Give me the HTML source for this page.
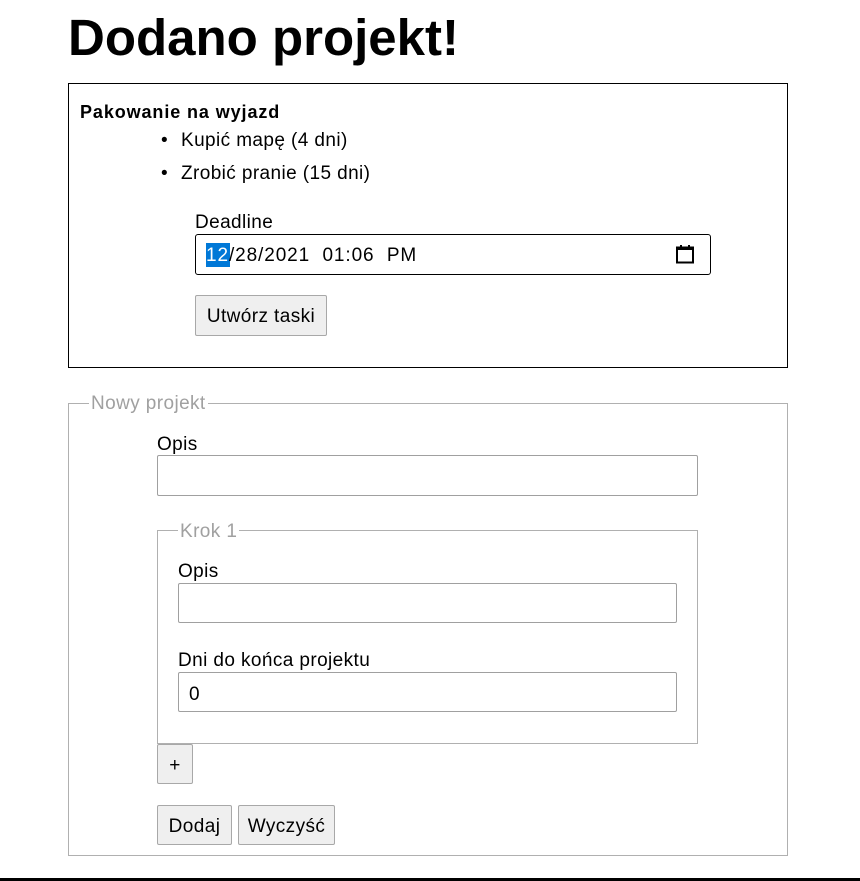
<!DOCTYPE html>
<html><head><meta charset="utf-8"><style>
body{margin:0;width:860px;height:881px;background:#fff;position:relative;font-family:"Liberation Sans","DejaVu Sans",sans-serif;font-size:19px;letter-spacing:0.4px;color:#000;overflow:hidden}
.a{position:absolute;white-space:nowrap;line-height:22px;margin-top:2px}
.box{position:absolute;box-sizing:border-box}
.inp{position:absolute;box-sizing:border-box;border:1px solid #a0a0a0;border-radius:2px;background:#fff}
.btn{position:absolute;box-sizing:border-box;border:1px solid #a8a8a8;border-radius:2px;background:#efefef;text-align:center;line-height:41px;font-size:19px}
.lg{position:absolute;background:#fff;color:#a0a0a0;padding:0 2px;line-height:22px;white-space:nowrap;margin-top:1px}
</style></head><body>
<div class="a" style="left:68px;top:6px;font-size:51px;letter-spacing:0;font-weight:bold;line-height:60px">Dodano projekt!</div>
<div class="box" style="left:68px;top:83px;width:720px;height:285px;border:1px solid #000"></div>
<div class="a" style="left:80px;top:99px;font-weight:bold;font-size:18px;letter-spacing:0.9px">Pakowanie na wyjazd</div>
<div class="a" style="left:161px;top:128px">•</div>
<div class="a" style="left:181px;top:128px">Kupić mapę (4 dni)</div>
<div class="a" style="left:161px;top:161px">•</div>
<div class="a" style="left:181px;top:161px">Zrobić pranie (15 dni)</div>
<div class="a" style="left:195px;top:210px">Deadline</div>
<div class="box" style="left:195px;top:234px;width:516px;height:41px;border:1px solid #000;border-radius:3px"></div>
<div class="box" style="left:206px;top:243px;width:24px;height:24px;background:#0078d7"></div>
<div class="a" style="left:206px;top:243px;letter-spacing:0.9px"><span style="color:#fff">12</span>/28/2021&nbsp; 01:06&nbsp; PM</div>
<svg class="box" style="left:674px;top:243px" width="22" height="22" viewBox="0 0 22 22"><rect x="3" y="4.5" width="16" height="15" fill="none" stroke="#000" stroke-width="2"/><rect x="3" y="4" width="16" height="3" fill="#000"/><rect x="6" y="2" width="2" height="3" fill="#000"/><rect x="14" y="2" width="2" height="3" fill="#000"/></svg>
<div class="btn" style="left:195px;top:295px;width:132px;height:41px">Utwórz taski</div>

<div class="box" style="left:68px;top:403px;width:720px;height:453px;border:1px solid #b0b0b0"></div>
<div class="lg" style="left:89px;top:392px">Nowy projekt</div>
<div class="a" style="left:157px;top:432px">Opis</div>
<div class="inp" style="left:157px;top:455px;width:541px;height:41px"></div>
<div class="box" style="left:157px;top:530px;width:541px;height:214px;border:1px solid #b0b0b0"></div>
<div class="lg" style="left:178px;top:520px">Krok 1</div>
<div class="a" style="left:178px;top:559px">Opis</div>
<div class="inp" style="left:178px;top:583px;width:499px;height:40px"></div>
<div class="a" style="left:178px;top:648px">Dni do końca projektu</div>
<div class="inp" style="left:178px;top:672px;width:499px;height:40px"></div>
<div class="a" style="left:189px;top:682px">0</div>
<div class="btn" style="left:157px;top:744px;width:36px;height:40px">+</div>
<div class="btn" style="left:157px;top:805px;width:75px;height:40px">Dodaj</div>
<div class="btn" style="left:238px;top:805px;width:97px;height:40px">Wyczyść</div>
<div class="box" style="left:0;top:878px;width:860px;height:3px;background:#000"></div>
</body></html>
